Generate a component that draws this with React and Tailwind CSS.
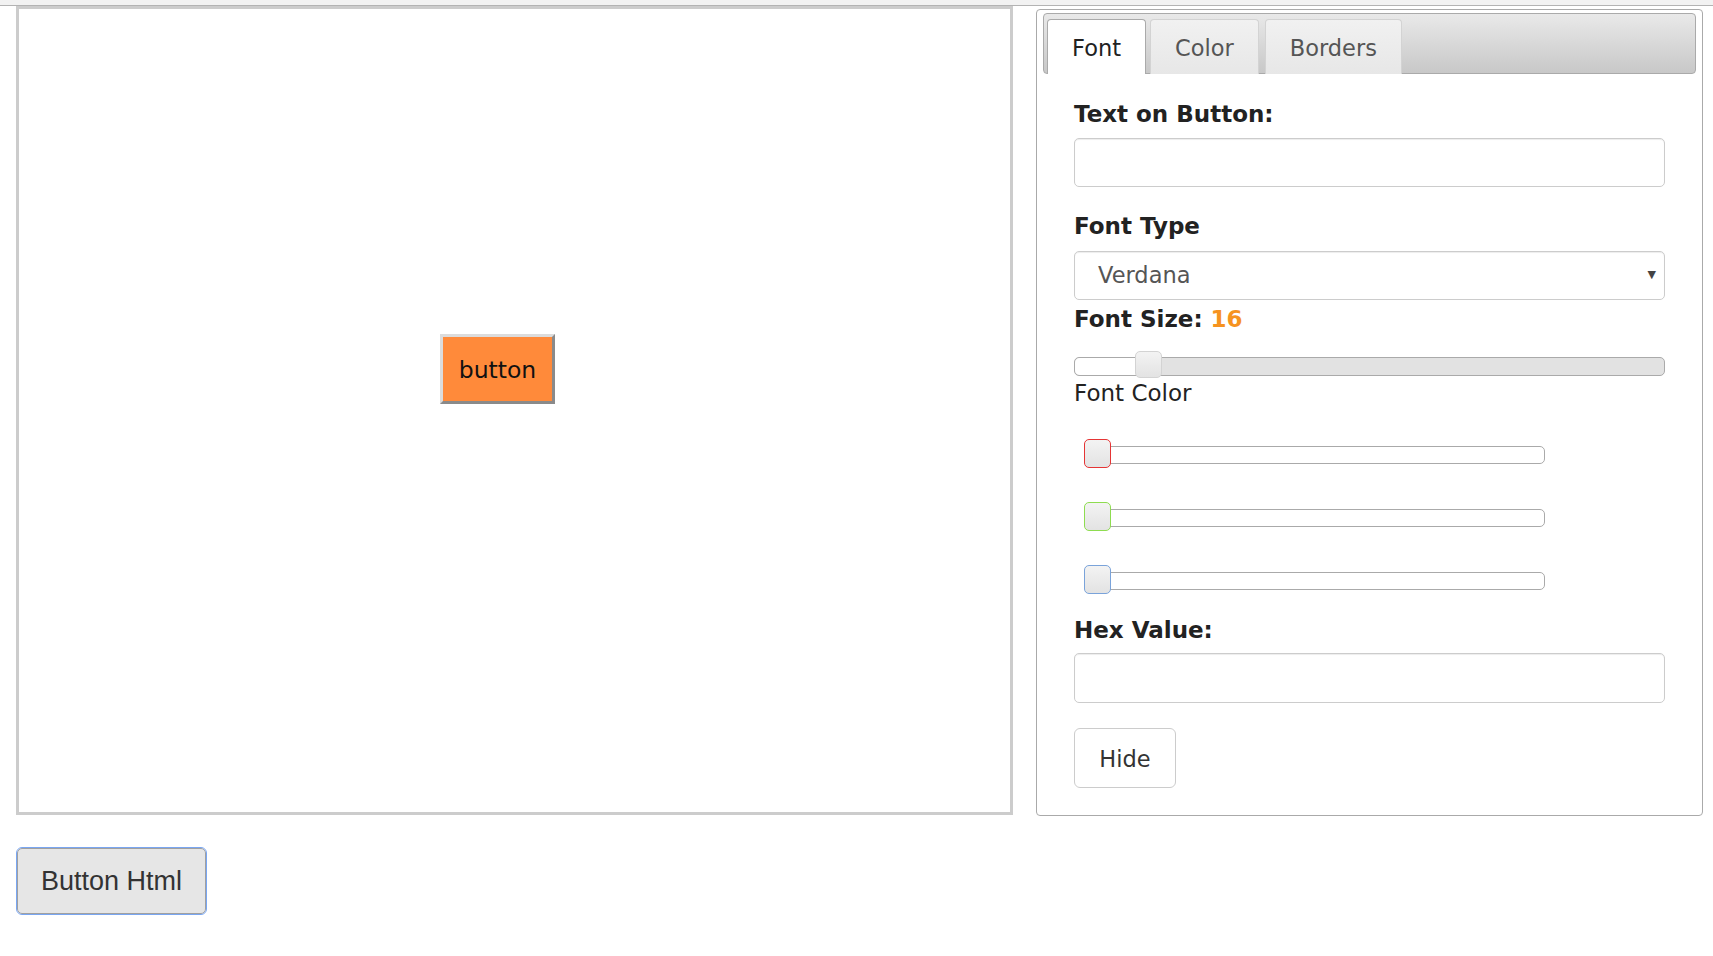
import React from "react";

const verdana = { fontFamily: '"DejaVu Sans", Verdana, sans-serif' };

const colorSliders = [
  { id: "red", border: "border-[#e53535]", mt: "mt-[37px]" },
  { id: "green", border: "border-[#8edc50]", mt: "mt-[45px]" },
  { id: "blue", border: "border-[#7aa3da]", mt: "mt-[45px]" },
];

const Tabs = () => (
  <div className="flex items-end h-[61px] px-[3px] border border-[#aaa] rounded-[4px] bg-gradient-to-b from-[#e9e9e9] to-[#c8c8c8]">
    <div className="h-[55px] -mb-px pt-[4px] px-[24px] flex items-center bg-white border border-b-0 border-[#aaa] rounded-t-[4px] text-[22.5px] text-[#212121]">
      Font
    </div>
    <div className="ml-[4px] h-[55px] -mb-px pt-[4px] px-[24px] flex items-center bg-gradient-to-b from-[#f1f1f1] to-[#e7e7e7] border border-b-0 border-[#d3d3d3] rounded-t-[4px] text-[22.5px] text-[#555]">
      Color
    </div>
    <div className="ml-[6px] h-[55px] -mb-px pt-[4px] px-[24px] flex items-center bg-gradient-to-b from-[#f1f1f1] to-[#e7e7e7] border border-b-0 border-[#d3d3d3] rounded-t-[4px] text-[22.5px] text-[#555]">
      Borders
    </div>
  </div>
);

const Handle = ({ border, left, top, height }) => (
  <div
    className={`absolute w-[27px] rounded-[5px] border ${border} bg-gradient-to-b from-[#f3f3f3] to-[#e3e3e3] ${left} ${top} ${height}`}
  />
);

export default function App() {
  return (
    <div className="min-h-screen bg-white text-[#222]" style={verdana}>
      <div className="h-[6px] bg-[#f2f2f2] border-b border-[#b3b3b3]" />

      <div className="flex items-start pl-[16px]">
        <div className="relative w-[997px] h-[809px] border-[3px] border-[#ccc] bg-white">
          <div className="absolute left-[421px] top-[325px] w-[115px] h-[70px] pt-[3px] flex items-center justify-center bg-[#ff8a3a] border-[3px] border-t-[#dcdcdc] border-l-[#dcdcdc] border-r-[#8a8a8a] border-b-[#8a8a8a] text-[23.5px] text-[#111]">
            button
          </div>
        </div>

        <div className="ml-[23px] mt-[3px] w-[667px] border border-[#aaa] rounded-[4px] bg-white px-[6px] pt-[3px] pb-[27px]">
          <Tabs />

          <div className="px-[31px]">
            <p className="mt-[24px] leading-[32px] text-[23px] font-bold">
              Text on Button:
            </p>
            <div className="mt-[8px] h-[49px] border border-[#ccc] rounded-[5px] shadow-[inset_0_1px_1px_rgba(0,0,0,0.075)]" />

            <p className="mt-[23px] leading-[32px] text-[23px] font-bold">
              Font Type
            </p>
            <div className="mt-[9px] h-[49px] border border-[#ccc] rounded-[5px] flex items-center justify-between pl-[23px] pr-[8px] shadow-[inset_0_1px_1px_rgba(0,0,0,0.075)]">
              <span className="text-[22.5px] text-[#555]">Verdana</span>
              <span className="text-[11px] text-[#444]">▼</span>
            </div>

            <p className="mt-[3px] leading-[32px] text-[23px] font-bold">
              Font Size: <span className="text-[#f6931f]">16</span>
            </p>
            <div className="relative mt-[22px] h-[19px] border border-[#aaa] rounded-[5px] bg-[#e2e2e2]">
              <div className="h-full w-[74px] rounded-l-[5px] bg-white" />
              <Handle
                border="border-[#d3d3d3]"
                left="left-[60px]"
                top="top-[-7px]"
                height="h-[27px]"
              />
            </div>

            <p className="mt-px leading-[32px] text-[23px]">Font Color</p>

            {colorSliders.map((slider) => (
              <div
                key={slider.id}
                className={`relative ${slider.mt} ml-[10px] w-[461px] h-[18px] border border-[#aaa] rounded-[5px] bg-white`}
              >
                <Handle
                  border={slider.border}
                  left="left-[-1px]"
                  top="top-[-8px]"
                  height="h-[29px]"
                />
              </div>
            ))}

            <p className="mt-[24px] leading-[32px] text-[23px] font-bold">
              Hex Value:
            </p>
            <div className="mt-[7px] h-[50px] border border-[#ccc] rounded-[5px] shadow-[inset_0_1px_1px_rgba(0,0,0,0.075)]" />

            <button className="mt-[25px] w-[102px] h-[60px] pt-[3px] border border-[#ccc] rounded-[6px] bg-white text-[22.5px] text-[#333]">
              Hide
            </button>
          </div>
        </div>
      </div>

      <div className="pl-[17px] mt-[32px]">
        <button
          className="w-[189px] h-[66px] border border-[#a0a0a0] rounded-[5px] bg-[#e6e6e6] outline outline-1 outline-[#79a6f2] text-[27px] text-[#333]"
          style={{ fontFamily: '"Liberation Sans", Arial, sans-serif' }}
        >
          Button Html
        </button>
      </div>
    </div>
  );
}
